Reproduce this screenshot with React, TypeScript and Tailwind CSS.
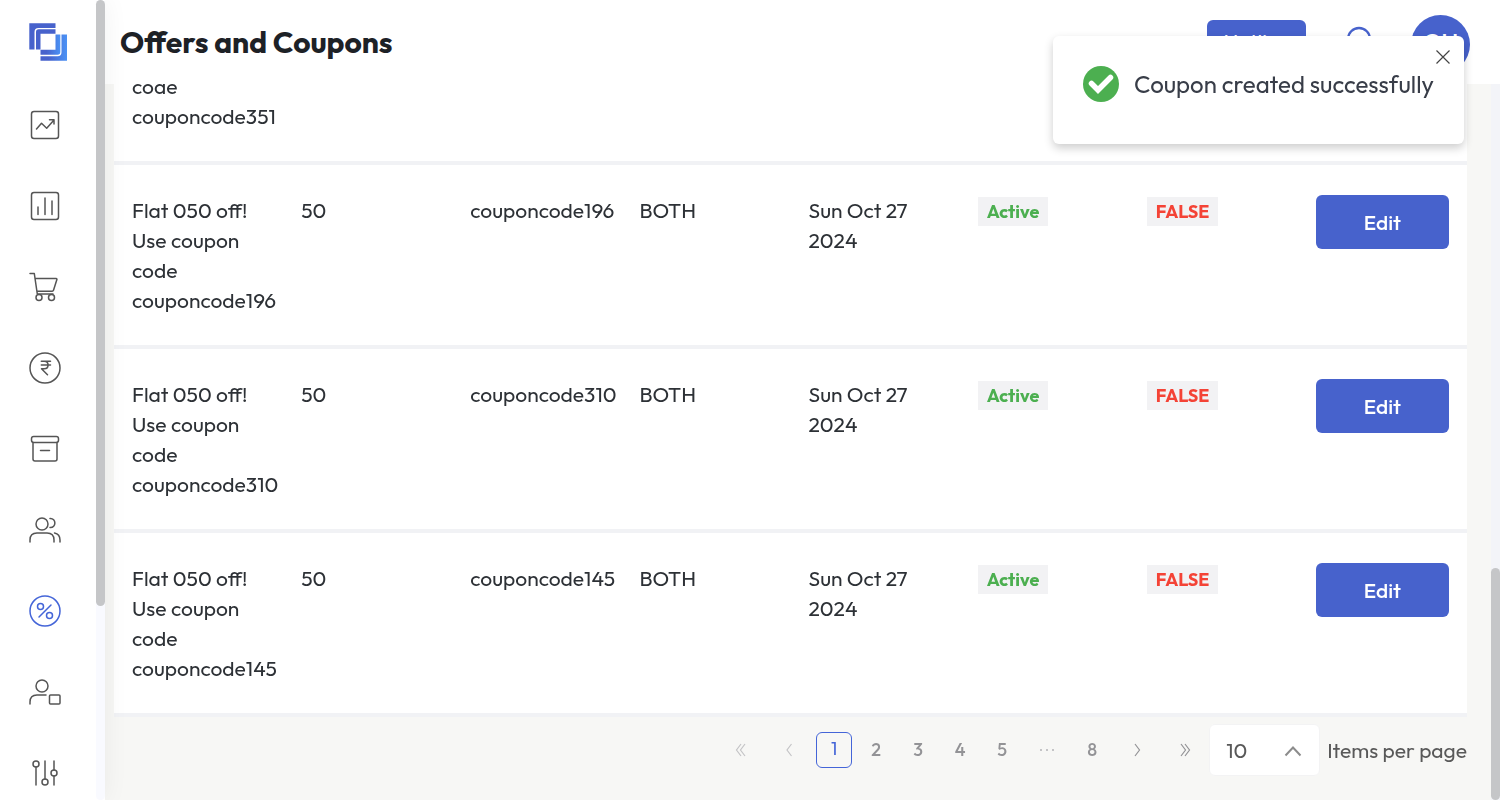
const icon = {
  width: 36,
  height: 36,
  viewBox: '0 0 36 36',
  fill: 'none',
  stroke: 'currentColor',
  strokeWidth: 1.5,
  strokeLinecap: 'round' as const,
  strokeLinejoin: 'round' as const,
  'aria-hidden': true,
};

const navItems = [
  {
    label: 'Dashboard',
    art: (
      <svg {...icon}>
        <rect x="4.5" y="4.5" width="27" height="27" rx="2.5" />
        <path d="M9.5 22l5-5.700 5.200 5L27 13M22.500 12.700H27v4.200" />
      </svg>
    ),
  },
  {
    label: 'Reports',
    art: (
      <svg {...icon}>
        <rect x="4.500" y="4.500" width="27" height="27" rx="2.500" />
        <path d="M11 19v7.500M18 10v16.500M25 13v13.500" />
      </svg>
    ),
  },
  {
    label: 'Orders',
    art: (
      <svg {...icon}>
        <path d="M3 4.500h4.300L10.300 25h15.700M8.500 9.500h20.700c.6 0 .9.500.7 1L26.500 21.300c-.2.600-.6.900-1.300.900H10" />
        <circle cx="12" cy="28.500" r="3" />
        <circle cx="24.500" cy="28.500" r="3" />
      </svg>
    ),
  },
  {
    label: 'Payments',
    art: (
      <svg {...icon}>
        <circle cx="18" cy="18" r="15" />
        <path d="M14.300 11.300h9.200M14.300 15h9.200M14.300 11.300h3c5 0 5 7.500 0 7.500H14.500l6 6" />
      </svg>
    ),
  },
  {
    label: 'Inventory',
    art: (
      <svg {...icon}>
        <rect x="4.500" y="5.500" width="27" height="6" rx="2.200" />
        <path d="M6 11.500V28c0 1.200.8 2 2 2h20c1.200 0 2-.8 2-2V11.500M13.500 19.500h9" />
      </svg>
    ),
  },
  {
    label: 'Customers',
    art: (
      <svg {...icon}>
        <circle cx="15" cy="12" r="6" />
        <path d="M3 30v-2c0-4.500 2.800-7 7-7h10c4.200 0 7 2.500 7 7v2M23 6.500c6.500-.5 6.500 9.500 0 9M27.500 21c3.700.8 5.500 3.200 5.500 7v2" />
      </svg>
    ),
  },
  {
    label: 'Offers',
    active: true,
    art: (
      <svg {...icon}>
        <circle cx="18" cy="18" r="15" />
        <circle cx="13.500" cy="13.500" r="3" />
        <circle cx="22.500" cy="22.500" r="3" />
        <path d="M24 12L12 24" />
      </svg>
    ),
  },
  {
    label: 'Staff',
    art: (
      <svg {...icon}>
        <circle cx="15" cy="12" r="6" />
        <path d="M3 30v-2c0-4.500 2.800-7 7-7h9" />
        <rect x="22.500" y="21" width="10.500" height="9" rx="1" />
      </svg>
    ),
  },
  {
    label: 'Settings',
    art: (
      <svg {...icon}>
        <circle cx="9" cy="9" r="3" />
        <circle cx="18" cy="27" r="3" />
        <circle cx="27" cy="18" r="3" />
        <path d="M9 12v18M18 6v18M27 6v9M27 21v9" />
      </svg>
    ),
  },
];

const coupons = ['351', '196', '310', '145'].map((n) => 'couponcode' + n);

const chevron = {
  width: 16,
  height: 16,
  viewBox: '0 0 16 16',
  fill: 'none',
  stroke: 'currentColor',
  strokeWidth: 1.2,
  'aria-hidden': true,
};

function Logo() {
  return (
    <svg width="40" height="40" viewBox="0 0 40 40" role="img" aria-label="Home">
      <defs>
        <linearGradient id="logoBlue" x1="0" y1="0" x2="1" y2="0">
          <stop offset="0.3" stopColor="#4762cc" />
          <stop offset="1" stopColor="#4b92f5" />
        </linearGradient>
      </defs>
      <path d="M1.300 1.300h26.200v4.700H10.500q-4 0-4 4V27.500H1.300z" fill="#4762cc" />
      <path d="M8 27.500V10q0-2.700 2.700-2.700H27.500v4.500H12.500v15.700z" fill="#4762cc" />
      <path d="M39 38.700H12.500v-4.500h17q4 0 4-4V12.500H39z" fill="url(#logoBlue)" />
      <path d="M32.300 12.500v17.500q0 2.700-2.700 2.700H12.500v-5h15V12.500z" fill="url(#logoBlue)" />
    </svg>
  );
}

function CouponRow({ code }: { code: string }) {
  return (
    <tr className="border-b-4 border-[#f1f2f5] bg-white align-top">
      <td className="px-[18px] py-[30px]">Flat 050 off! Use coupon code {code}</td>
      <td className="px-[18px] py-[30px]">50</td>
      <td className="px-[18px] py-[30px]">{code}</td>
      <td className="px-[18px] py-[30px]">BOTH</td>
      <td className="px-[18px] py-[30px]">Sun Oct 27 2024</td>
      <td className="px-[18px] py-8">
        <span className="block w-fit bg-[#f2f2f4] px-[9px] text-lg leading-[29px] font-bold text-[#4caf50]">Active</span>
      </td>
      <td className="px-[18px] py-8">
        <span className="block w-fit bg-[#f2f2f4] px-[9px] text-lg leading-[29px] font-bold text-[#f44336]">FALSE</span>
      </td>
      <td className="px-[18px] py-[30px]">
        <button className="h-[54px] w-full rounded-md bg-[#4762cc] font-medium text-white">Edit</button>
      </td>
    </tr>
  );
}

export default function App() {
  return (
    <div className="flex h-screen overflow-hidden bg-[#f7f7f5] font-['Outfit','Lato',sans-serif] text-[#212529]">
      <aside className="z-20 flex w-[105px] shrink-0 bg-white shadow-[0_0_24px_rgba(0,0,0,0.06)]">
        <div className="flex flex-1 flex-col">
          <a href="#home" className="mt-[22px] ml-7 w-10">
            <Logo />
          </a>
          <nav className="mt-[45px] ml-[27px] flex flex-col gap-[45px]">
            {navItems.map((item) => (
              <a
                key={item.label}
                href="#section"
                aria-label={item.label}
                className={item.active ? 'w-9 text-[#4465d8]' : 'w-9 text-[#555555]'}
              >
                {item.art}
              </a>
            ))}
          </nav>
        </div>
        <div className="w-[9px] rounded-full bg-[#f9faff]">
          <div className="h-[606px] rounded-full bg-[#c5c6c8]" />
        </div>
      </aside>

      <div className="flex min-w-0 flex-1 flex-col">
        <header className="flex h-[84px] shrink-0 items-center bg-white pr-[30px] pl-[15px]">
          <h1 className="flex-1 text-[30px] leading-9 font-bold text-[#1d2126]">Offers and Coupons</h1>
          <div className="flex items-center pt-1">
            <button className="h-12 w-[99px] rounded-md bg-[#4762cc] pb-1 text-[21px] font-normal text-white">Hotline</button>
            <button aria-label="Notifications" className="ml-[35px] text-[#4762cc]">
              <svg width="36" height="36" viewBox="0 0 36 36" fill="none" stroke="currentColor" strokeWidth="2.300" strokeLinecap="round" strokeLinejoin="round" aria-hidden="true">
                <path d="M7 27V13a11 11 0 0 1 22 0V27M4 27h28M15 32h6" />
              </svg>
            </button>
            <div className="ml-[34px] flex size-[59px] items-center justify-center rounded-full bg-[#4762cc] pb-1 text-2xl font-medium text-white">
              GH
            </div>
          </div>
        </header>

        <div className="flex min-h-0 flex-1">
          <main className="flex min-w-0 flex-1 flex-col justify-end overflow-hidden pr-6 pl-[9px] will-change-transform">
            <table className="w-full shrink-0 table-fixed border-collapse text-[21px] leading-[30px] font-normal text-[#2d3136]">
              <tbody>
                {coupons.map((code) => (
                  <CouponRow key={code} code={code} />
                ))}
              </tbody>
            </table>
            <div className="flex h-[83px] shrink-0 items-start justify-end pt-[7px]">
              <nav aria-label="Pagination" className="mt-2 flex h-9 items-center text-lg font-medium text-[#939396]">
                <button aria-label="First page" className="flex w-12 justify-center text-[#c4c4c6]">
                  <svg {...chevron}>
                    <path d="M8 2L3.500 8 8 14M12 2L7.500 8 12 14" />
                  </svg>
                </button>
                <button aria-label="Previous page" className="flex w-12 justify-center text-[#c4c4c6]">
                  <svg {...chevron}>
                    <path d="M10.500 2L6 8l4.500 6" />
                  </svg>
                </button>
                <button aria-current="page" className="mx-[3px] h-9 w-9 rounded-md border border-[#4465d8] pb-0.5 font-normal text-[#4465d8]">
                  1
                </button>
                <button className="w-[42px]">2</button>
                <button className="w-[42px]">3</button>
                <button className="w-[42px]">4</button>
                <button className="w-[42px]">5</button>
                <span className="flex w-12 justify-center gap-1">
                  <span className="size-0.5 bg-[#c4c4c6]" />
                  <span className="size-0.5 bg-[#c4c4c6]" />
                  <span className="size-0.5 bg-[#c4c4c6]" />
                </span>
                <button className="w-[42px]">8</button>
                <button aria-label="Next page" className="flex w-12 justify-center">
                  <svg {...chevron}>
                    <path d="M6 2l4.500 6L6 14" />
                  </svg>
                </button>
                <button aria-label="Last page" className="flex w-12 justify-center">
                  <svg {...chevron}>
                    <path d="M4 2l4.500 6L4 14M8 2l4.500 6L8 14" />
                  </svg>
                </button>
              </nav>
              <div className="relative flex text-[#595959]">
                <select
                  id="page-size"
                  defaultValue="10"
                  className="h-[52px] w-[111px] appearance-none rounded-md border border-[#f3f3f4] bg-white pt-0.5 pl-4 text-[21px] font-normal"
                >
                  <option>10</option>
                  <option>20</option>
                  <option>50</option>
                </select>
                <svg className="pointer-events-none absolute top-5 right-[18px] text-[#8c8c8c]" width="18" height="14" viewBox="0 0 18 14" fill="none" stroke="currentColor" strokeWidth="2" aria-hidden="true">
                  <path d="M1.500 11.500L9 3.500l7.500 8" />
                </svg>
              </div>
              <label htmlFor="page-size" className="ml-[7px] text-[21px] leading-[52px] font-normal text-[#595959]">
                Items per page
              </label>
            </div>
          </main>
          <div className="flex w-[9px] shrink-0 flex-col justify-end bg-[#f3f4f8]">
            <div className="h-[232px] rounded-full bg-[#c5c6c8]" />
          </div>
        </div>
      </div>

      <div
        role="status"
        className="fixed top-9 right-9 z-30 flex h-[108px] w-[411px] rounded-md bg-white pt-[30px] pl-[30px] shadow-[0_4px_10px_rgba(0,0,0,0.2)] will-change-transform"
      >
        <svg width="36" height="36" viewBox="0 0 36 36" aria-hidden="true">
          <circle cx="18" cy="18" r="18" fill="#4caf50" />
          <path d="M8.500 17.500l6.500 6.500L27.500 11.500" fill="none" stroke="#fff" strokeWidth="5.500" strokeLinecap="round" />
        </svg>
        <p className="ml-[15px] text-2xl leading-9 font-normal text-[#383d48]">Coupon created successfully</p>
        <button aria-label="Close" className="absolute top-3.5 right-3.5 text-[#444]">
          <svg width="14" height="14" viewBox="0 0 14 14" stroke="currentColor" strokeWidth="1.200" aria-hidden="true">
            <path d="M.5.500l13 13M13.500.500l-13 13" />
          </svg>
        </button>
      </div>
    </div>
  );
}
